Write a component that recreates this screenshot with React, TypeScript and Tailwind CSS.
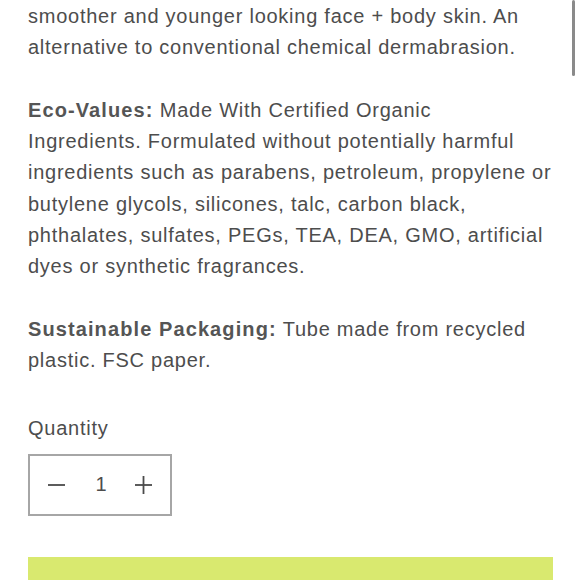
export default function App() {
  return (
    <div className="relative w-[580px] h-[580px] overflow-hidden bg-white" style={{ fontFamily: '"Liberation Sans", Arial, sans-serif' }}>
      <div className="absolute right-[5px] top-0 w-[3px] h-[76px] rounded-full bg-[#8a8a8a]" />
      <div className="pl-[28px] pt-[1px] whitespace-nowrap text-[20px] leading-[31.3px] tracking-[0.75px] text-[#4d4d4d]">
        <p>smoother and younger looking face + body skin. An<br />alternative to conventional chemical dermabrasion.</p>
        <p className="mt-[31.3px]">
          <span className="font-bold tracking-[1.1px] text-[#555]">Eco-Values:</span> Made With Certified Organic<br />
          Ingredients. Formulated without potentially harmful<br />
          ingredients such as parabens, petroleum, propylene or<br />
          butylene glycols, silicones, talc, carbon black,<br />
          phthalates, sulfates, PEGs, TEA, DEA, GMO, artificial<br />
          dyes or synthetic fragrances.
        </p>
        <p className="mt-[31.3px]">
          <span className="font-bold tracking-[1.1px] text-[#555]">Sustainable Packaging:</span> Tube made from recycled<br />plastic. FSC paper.
        </p>
        <p className="mt-[36px]">Quantity</p>
        <div className="mt-[10px] flex h-[62px] w-[144px] items-center justify-between border-2 border-[#a6a6a6] pl-[18px] pr-[17px]">
          <svg width="18" height="18" viewBox="0 0 18 18"><line x1="0" y1="9" x2="17" y2="9" stroke="#4a4a4a" strokeWidth="1.8" /></svg>
          <span className="text-[20px] pl-[2px]">1</span>
          <svg width="18" height="18" viewBox="0 0 18 18"><line x1="0" y1="9" x2="17" y2="9" stroke="#4a4a4a" strokeWidth="1.8" /><line x1="8.5" y1="0" x2="8.5" y2="18" stroke="#4a4a4a" strokeWidth="1.8" /></svg>
        </div>
        <div className="mt-[41px] h-[40px] w-[525px] bg-[#d9e96f]" />
      </div>
    </div>
  );
}
